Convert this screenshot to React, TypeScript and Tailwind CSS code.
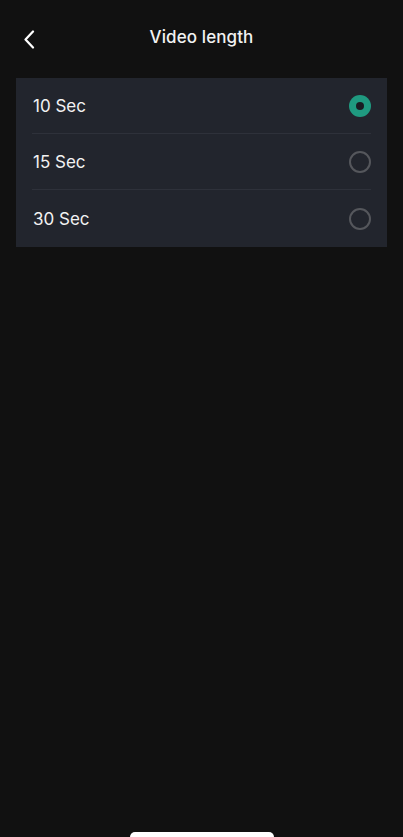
const options = ['10 Sec', '15 Sec', '30 Sec'];

export default function App() {
  const selected = 0;

  return (
    <div
      className="relative flex h-[837px] w-full flex-col bg-[#111111] text-white"
      style={{ fontFamily: 'Inter, "Liberation Sans", sans-serif' }}
    >
      {/* Header */}
      <div className="relative flex h-[78px] items-center justify-center pb-[2px]">
        <button className="absolute left-[20px] top-[28px] flex h-[22px] w-[18px] items-center justify-center">
          <svg width="12" height="19" viewBox="0 0 12 19" fill="none">
            <path
              d="M10 1.5L2.5 9.5L10 17.5"
              stroke="white"
              strokeWidth="2.2"
              strokeLinecap="round"
              strokeLinejoin="round"
            />
          </svg>
        </button>
        <h1 className="text-[17px] font-medium tracking-[0.1px] text-[#f2f2f2]">Video length</h1>
      </div>

      {/* Options */}
      <div className="mx-[16px] bg-[#22252d]">
        {options.map((label, i) => (
          <div key={label} className="px-[16px]">
            <div
              className={`flex items-center justify-between ${
                i < options.length - 1 ? 'h-[56px] border-b border-[#2e313a]' : 'h-[57px]'
              }`}
            >
              <span className="pl-[1px] pt-[2px] text-[17px] text-[#f2f2f2]">{label}</span>
              {i === selected ? (
                <span className="flex h-[22px] w-[22px] items-center justify-center rounded-full bg-[#1f9a80]">
                  <span className="h-[8px] w-[8px] rounded-full bg-[#1a1c22]" />
                </span>
              ) : (
                <span className="h-[22px] w-[22px] rounded-full border-2 border-[#55575c]" />
              )}
            </div>
          </div>
        ))}
      </div>

      {/* Home indicator */}
      <div className="absolute bottom-0 left-1/2 h-[5px] w-[144px] -translate-x-1/2 rounded-t-full bg-white" />
    </div>
  );
}
